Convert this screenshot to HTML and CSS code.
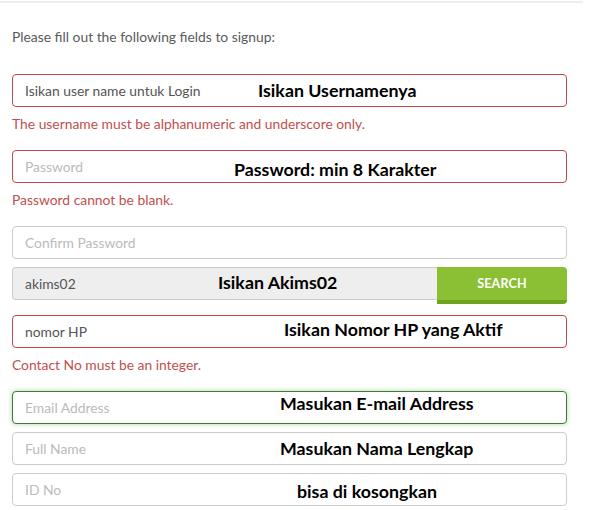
FILE: index.html
```html
<!DOCTYPE html>
<html>
<head>
<meta charset="utf-8">
<link rel="stylesheet" href="styles.css">
</head>
<body>
<div class="topline"></div>
<div class="page">
  <p class="intro">Please fill out the following fields to signup:</p>
  <form class="form">
    <div class="group">
      <div class="field error"><span class="value">Isikan user name untuk Login</span><span class="note n1">Isikan Usernamenya</span></div>
      <div class="help">The username must be alphanumeric and underscore only.</div>
    </div>
    <div class="group">
      <div class="field error"><span class="ph">Password</span><span class="note n2">Password: min 8 Karakter</span></div>
      <div class="help">Password cannot be blank.</div>
    </div>
    <div class="group">
      <div class="field"><span class="ph">Confirm Password</span></div>
    </div>
    <div class="group row">
      <div class="field filled"><span class="value">akims02</span><span class="note n3">Isikan Akims02</span></div>
      <div class="btn">SEARCH</div>
    </div>
    <div class="group">
      <div class="field error"><span class="value">nomor HP</span><span class="note n4">Isikan Nomor HP yang Aktif</span></div>
      <div class="help">Contact No must be an integer.</div>
    </div>
    <div class="group">
      <div class="field success"><span class="ph">Email Address</span><span class="note n5">Masukan E-mail Address</span></div>
    </div>
    <div class="group">
      <div class="field"><span class="ph">Full Name</span><span class="note n6">Masukan Nama Lengkap</span></div>
    </div>
    <div class="group">
      <div class="field"><span class="ph">ID No</span><span class="note n7">bisa di kosongkan</span></div>
    </div>
  </form>
</div>
</body>
</html>
```
FILE: styles.css
```css
html, body {
  margin: 0;
  padding: 0;
  background: #fff;
}
body {
  font-family: "Lato", "Open Sans", sans-serif;
  font-size: 13.85px;
  color: #555;
}
.topline {
  margin-top: 1px;
  height: 2px;
  width: 583px;
  background: #eeeeee;
}
.page {
  padding: 0 12px;
  width: 555px;
}
.intro {
  margin: 24px 0 27px;
  line-height: 20px;
  color: #5a5a5a;
}
.form {
  display: flex;
  flex-direction: column;
  gap: 8px;
}
.group {
  display: flex;
  flex-direction: column;
}
.group.row {
  flex-direction: row;
  align-items: flex-start;
  margin-bottom: 3px;
}
.field {
  position: relative;
  box-sizing: border-box;
  height: 33px;
  border: 1px solid #cccccc;
  border-radius: 4px;
  padding: 0 12px;
  display: flex;
  align-items: center;
  background: #fff;
}
.row .field {
  flex: 1;
  border-radius: 4px 0 0 4px;
  border-right: none;
}
.field.filled {
  background: #eeeeee;
}
.field.error {
  border-color: #c0474a;
}
.field.success {
  border-color: #3f7a3b;
  box-shadow: 0 0 5px rgba(120, 190, 90, 0.6);
}
.value {
  color: #555;
}
.ph {
  color: #bbbbbb;
}
.help {
  margin: 7px 0 8px;
  line-height: 20px;
  color: #c0504d;
}
.btn {
  box-sizing: border-box;
  width: 130px;
  height: 37px;
  background: #8bc034;
  border-bottom: 4px solid #6fa31f;
  border-radius: 0 4px 4px 0;
  color: #fff;
  font-weight: 700;
  font-size: 12.5px;
  letter-spacing: 0.2px;
  display: flex;
  align-items: center;
  justify-content: center;
}
.note {
  position: absolute;
  top: 50%;
  transform: translateY(-50%);
  font-family: "Lato", sans-serif;
  font-weight: 700;
  font-size: 17.8px;
  color: #000;
  white-space: nowrap;
}
.n1 { left: 245px; margin-top: -1px; }
.n2 { left: 221px; margin-top: 2px; }
.n3 { left: 205px; margin-top: -2px; }
.n4 { left: 271px; margin-top: -3px; }
.n5 { left: 267px; margin-top: -5px; }
.n6 { left: 267px; margin-top: -1px; }
.n7 { left: 284px; margin-top: 1px; }
```
